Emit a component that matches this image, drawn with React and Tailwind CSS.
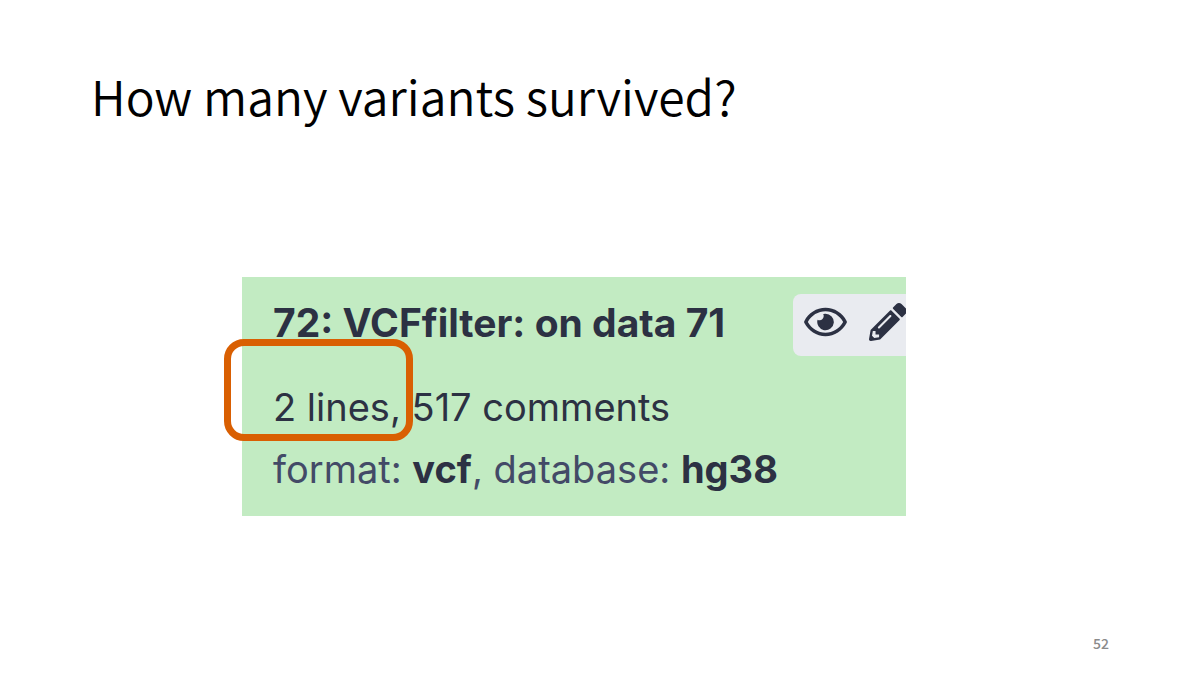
import { FaRegEye, FaPencilAlt } from "react-icons/fa";

function DatasetCard() {
  return (
    <section className="relative bg-[#c2ebc2] pb-4 pl-[31px] pt-[17px] font-[Inter,sans-serif] text-[38px] leading-[62px] text-[#2c3143]">
      <div className="flex items-start justify-between">
        <h2 className="whitespace-nowrap text-[39px] font-bold leading-[57px]">72: VCFfilter: on data 71</h2>
        <div className="flex h-[62px] w-[113px] items-start gap-[22px] overflow-hidden rounded-l-lg bg-[#e9ebf0] pl-[11px] pt-[9px]">
          <button type="button" aria-label="View data" className="shrink-0">
            <FaRegEye className="h-[38px] w-[43px]" />
          </button>
          <button type="button" aria-label="Edit attributes" className="shrink-0">
            <FaPencilAlt className="size-[38px]" />
          </button>
        </div>
      </div>
      <p className="mt-5 whitespace-nowrap">2 lines, 517 comments</p>
      <p className="whitespace-nowrap text-[#434a67]">
        format: <b className="font-bold text-[#2c3143]">vcf</b>, database:{" "}
        <b className="font-bold text-[#2c3143]">hg38</b>
      </p>
      <div className="pointer-events-none absolute -left-[18px] top-[62px] h-[102px] w-[189px] rounded-[20px] border-[7px] border-[#d95f02]" />
    </section>
  );
}

export default function App() {
  return (
    <main className="flex min-h-screen flex-col bg-white font-['Noto_Sans_CJK_SC',sans-serif]">
      <h1 className="px-[91px] pt-[60px] text-5xl font-[350] leading-[70px] text-black">
        How many variants survived?
      </h1>
      <div className="ml-[242px] mr-[294px] mt-[147px]">
        <DatasetCard />
      </div>
      <footer className="mt-auto px-[91px] pb-[22px] text-right text-sm font-medium leading-5 text-[#8b8b8b]">
        52
      </footer>
    </main>
  );
}
